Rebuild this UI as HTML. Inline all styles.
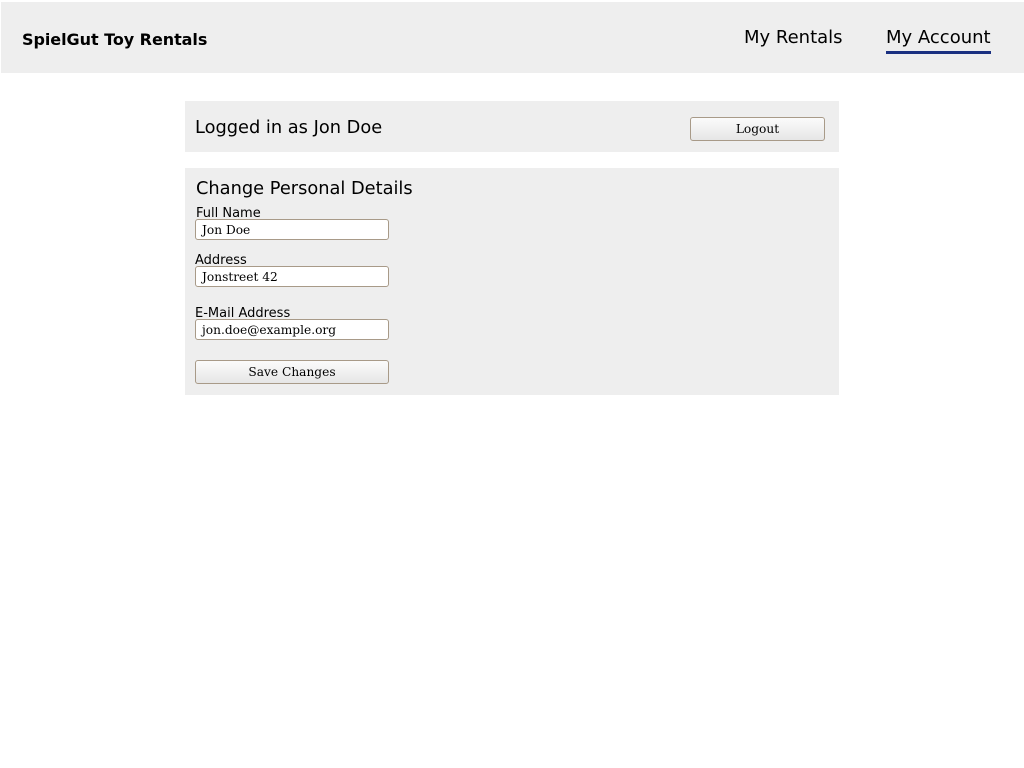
<!DOCTYPE html>
<html><head><style>
body{margin:0;width:1024px;height:768px;background:#fff;font-family:"DejaVu Sans","Liberation Sans",sans-serif;color:#000;position:relative;overflow:hidden}
.a{position:absolute;white-space:nowrap}
.hdr{position:absolute;left:1px;top:2px;width:1023px;height:71px;background:#eeeeee}
.box{position:absolute;background:#eeeeee}
.inp{position:absolute;border:1px solid #a89a88;border-radius:3px;background:#fff;font-family:"DejaVu Serif",serif;font-size:12.2px;line-height:20px;padding-left:6px;box-sizing:border-box;width:194px;height:21px}
.btn{position:absolute;border:1px solid #a89a88;border-radius:3px;background:linear-gradient(#fbfbfb,#e6e6e6);font-family:"DejaVu Serif",serif;font-size:12.2px;text-align:center;box-sizing:border-box}
</style></head><body>
<div class="hdr"></div>
<div class="a" style="left:22px;top:30px;font-size:16px;font-weight:bold;letter-spacing:-0.05px">SpielGut Toy Rentals</div>
<div class="a" style="left:744px;top:26.5px;font-size:18px">My Rentals</div>
<div class="a" style="left:886px;top:26.5px;font-size:18px">My Account</div>
<div class="a" style="left:886px;top:51px;width:105px;height:3px;background:#1a3080"></div>

<div class="box" style="left:185px;top:101px;width:654px;height:51px"></div>
<div class="a" style="left:195px;top:117px;font-size:17.8px">Logged in as Jon Doe</div>
<div class="btn" style="left:690px;top:117px;width:135px;height:24px;line-height:22px">Logout</div>

<div class="box" style="left:185px;top:168px;width:654px;height:227px"></div>
<div class="a" style="left:196px;top:178px;font-size:17.8px">Change Personal Details</div>
<div class="a" style="left:196px;top:206px;font-size:13px">Full Name</div>
<div class="inp" style="left:195px;top:219px">Jon Doe</div>
<div class="a" style="left:195px;top:253px;font-size:13px">Address</div>
<div class="inp" style="left:195px;top:266px">Jonstreet 42</div>
<div class="a" style="left:195px;top:306px;font-size:13px">E-Mail Address</div>
<div class="inp" style="left:195px;top:319px">jon.doe@example.org</div>
<div class="btn" style="left:195px;top:360px;width:194px;height:24px;line-height:22px">Save Changes</div>
</body></html>
